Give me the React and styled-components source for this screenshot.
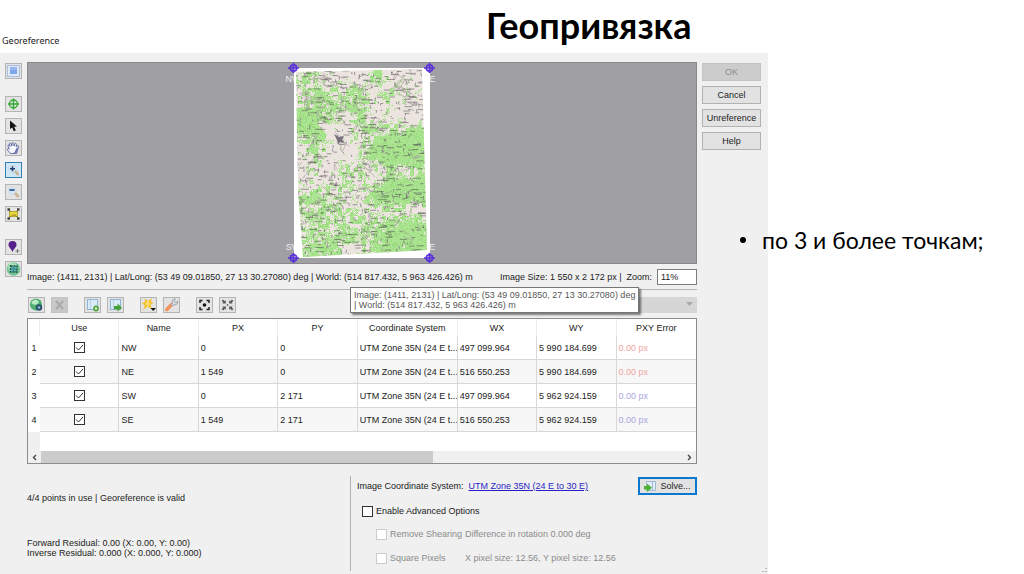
import React from 'react';
import styled, { createGlobalStyle, css } from 'styled-components';

const uiFont = '"Liberation Sans", Arial, sans-serif';
const slideFont = 'Lato, "Open Sans", sans-serif';

const GlobalStyle = createGlobalStyle`
  * {
    box-sizing: border-box;
  }

  body {
    margin: 0;
    background: #fff;
    color: #222;
    font-family: ${uiFont};
    font-size: 9px;
    line-height: 10px;
  }

  button, input, select {
    font: inherit;
    color: inherit;
  }
`;

const Slide = styled.main`
  display: flex;
  flex-direction: column;
  min-height: 100vh;
`;

const SlideHeader = styled.header`
  display: grid;
  grid-template-columns: 486fr 538fr;
  height: 53px;
`;

const SlideTitle = styled.h1`
  margin: 0;
  font-family: ${slideFont};
  font-size: 36px;
  font-weight: 700;
  line-height: 50px;
  color: #000;
`;

const Caption = styled.h2`
  align-self: end;
  margin: 0;
  padding: 0 2px 6px;
  font-family: "Noto Sans", sans-serif;
  font-size: 9px;
  font-weight: 400;
  line-height: 12px;
`;

const SlideBody = styled.div`
  flex: 1;
  display: grid;
  grid-template-columns: minmax(0, 740fr) 28px minmax(0, 256fr);
`;

const Bullets = styled.ul`
  grid-column: 2 / 4;
  grid-row: 1;
  z-index: 1;
  margin: 0;
  padding: 172px 0 0;
  list-style: none;
  font-family: ${slideFont};
  font-size: 23px;
  line-height: 30px;
  color: #000;

  li {
    display: grid;
    grid-template-columns: 22px 1fr;
  }

  li::before {
    align-self: center;
    justify-self: start;
    width: 6px;
    height: 6px;
    border-radius: 50%;
    background: #000;
    content: '';
  }
`;

const Dialog = styled.section`
  position: relative;
  grid-column: 1 / 3;
  grid-row: 1;
  display: flex;
  align-items: stretch;
  gap: 5px;
  padding: 9px 7px 0 5px;
  background: #f0f0f0;
`;

const ResizeGrip = styled.svg`
  position: absolute;
  right: 0;
  bottom: 0;
`;

const ToolColumn = styled.nav`
  display: flex;
  flex-direction: column;
  gap: 17px;
  padding-top: 1px;
`;

const ToolGroup = styled.div`
  display: flex;
  flex-direction: ${(props) => (props.$row ? 'row' : 'column')};
  gap: 6px;
`;

const IconButton = styled.button`
  width: 17px;
  height: 16px;
  padding: 0;
  border: 1px solid #b4b4b4;
  background: #e3e3e3;

  svg {
    display: block;
  }

  ${(props) => props.$active && css`
    border-color: #2f7fb5;
    background: #cfe6f7;
  `}

  &:disabled {
    border-color: #c4c4c4;
    background: #c8c8c8;
  }
`;

const Main = styled.div`
  flex: 1;
  min-width: 0;
`;

const Canvas = styled.div`
  display: flex;
  justify-content: center;
  border: 1px solid #88888c;
  background: #a09fa4;

  svg {
    display: block;
  }
`;

const StatusRow = styled.div`
  display: flex;
  align-items: center;
  height: 26px;
  border-bottom: 1px solid #b4b4b4;
  white-space: nowrap;
`;

const Position = styled.span`
  flex: 1;
`;

const ZoomInput = styled.input`
  width: 40px;
  height: 16px;
  margin-left: 5px;
  padding: 0 3px;
  border: 1px solid #7c7c7c;
  background: #fff;
`;

const Toolbar = styled.div`
  position: relative;
  display: flex;
  align-items: center;
  gap: 16px;
  height: 28px;
  padding: 1px 0 0 1px;
`;

const Method = styled.select`
  width: 170px;
  height: 16px;
  margin-left: auto;
  border: 0;
  border-radius: 0;
  appearance: none;
  background: #ccc url("data:image/svg+xml,%3Csvg xmlns='http://www.w3.org/2000/svg' width='7' height='5'%3E%3Cpath d='M0 0h7L3.5 4z' fill='%238c8c8c'/%3E%3C/svg%3E") no-repeat right 4px center;
`;

const Tooltip = styled.div`
  position: absolute;
  top: -3px;
  left: 323px;
  padding: 2px 3px;
  border: 1px solid #767676;
  background: #fff;
  box-shadow: 2px 2px 2px rgba(0, 0, 0, 0.5);
  color: #575757;
  white-space: nowrap;
`;

const TableFrame = styled.div`
  border: 1px solid #8c8c8c;
  background: linear-gradient(90deg, #f0f0f0 12px, #fff 12px);
`;

const PointTable = styled.table`
  width: 100%;
  margin-bottom: 19px;
  table-layout: fixed;
  border-collapse: separate;
  border-spacing: 0;
  background: #fff;

  col.row {
    width: 12px;
  }

  col.wide {
    width: 100px;
  }

  th {
    padding: 0;
    font-weight: 400;
    text-align: center;
  }

  thead th {
    height: 17px;
    border-right: 1px solid #ececec;
  }

  tbody th, td {
    height: 24px;
  }

  td {
    padding: 0 2px;
    border-right: 1px solid #d8d8d8;
    border-bottom: 1px solid #d8d8d8;
    white-space: nowrap;
    overflow: hidden;
  }

  tr > :last-child {
    border-right: 0;
  }

  tbody tr:nth-child(even) td {
    background: #f7f7f7;
  }
`;

const UseCell = styled.td`
  text-align: center;
`;

const ErrorCell = styled.td`
  color: ${(props) => (props.$world ? '#a9a6dc' : '#f3a3a3')};
`;

const CheckBox = styled.input.attrs({ type: 'checkbox' })`
  flex: none;
  width: 11px;
  height: 11px;
  margin: 0;
  appearance: none;
  border: 1px solid #333;
  background: #fff;
  vertical-align: middle;

  &:checked {
    background: #fff url("data:image/svg+xml,%3Csvg xmlns='http://www.w3.org/2000/svg' width='9' height='9'%3E%3Cpath d='M1 4.5L3.5 7L8 2' fill='none' stroke='%23333'/%3E%3C/svg%3E") no-repeat center;
  }

  &:disabled {
    border-color: #ccc;
  }
`;

const ScrollBar = styled.div`
  display: flex;
  align-items: center;
  height: 12px;
  background: #f0f0f0;

  svg {
    flex: none;
    margin: 0 4px;
  }
`;

const ScrollTrack = styled.div`
  flex: 1;
  height: 12px;
`;

const ScrollThumb = styled.div`
  width: 61%;
  height: 12px;
  background: #cbcbcb;
`;

const Footer = styled.div`
  display: grid;
  grid-template-columns: 323fr 347fr;
  padding-top: 12px;
`;

const Summary = styled.div`
  display: flex;
  flex-direction: column;
  gap: 35px;
  padding-top: 17px;

  p {
    margin: 0;
  }
`;

const Options = styled.div`
  display: flex;
  flex-direction: column;
  height: 95px;
  padding-left: 6px;
  border-left: 1px solid #b0b0b0;
`;

const SystemRow = styled.div`
  display: flex;
  align-items: center;
  gap: 5px;
  height: 20px;
  margin-bottom: 4px;

  a {
    flex: 1;
    color: #2a1fc4;
  }
`;

const OptionRow = styled.div`
  display: grid;
  grid-template-columns: ${(props) => (props.$nested ? '89px 1fr' : '1fr')};
  align-items: center;
  height: ${(props) => (props.$nested ? 24 : 22)}px;
  padding-left: ${(props) => (props.$nested ? 19 : 5)}px;
  color: ${(props) => (props.$nested ? '#8b8b8b' : '#222')};

  label {
    display: flex;
    align-items: center;
    gap: 3px;
  }
`;

const PushButton = styled.button`
  display: flex;
  align-items: center;
  justify-content: center;
  gap: 3px;
  width: 59px;
  height: 18px;
  padding: 0;
  border: 1px solid #b2b2b2;
  background: #e2e2e2;

  ${(props) => props.$primary && css`
    border: 2px solid #0a78d0;
  `}

  &:disabled {
    border-color: #c4c4c4;
    background: #ccc;
    color: #8c8c8c;
  }
`;

const Actions = styled.div`
  display: flex;
  flex-direction: column;
  gap: 5px;
  padding-top: 1px;
`;

const icons = {
  image: (
    <>
      <rect x="1.5" y="1.5" width="12" height="11" fill="#dfe9f8" stroke="#a9bfe0" />
      <rect x="4" y="3" width="7" height="7" fill="#7fa5ea" />
      <rect x="4" y="3" width="7" height="3" fill="#94b5f0" />
    </>
  ),
  target: (
    <g fill="none" stroke="#35a832" strokeWidth="1.4">
      <circle cx="7.5" cy="7" r="4" />
      <path d="M7.5 1.5v11M2 7h11" />
    </g>
  ),
  arrow: <path d="M4 1.500v8.500l2.200-1.600 1.600 3.800 2-.8L8.200 7.700l2.800-.2z" fill="#151515" />,
  hand: (
    <>
      <path
        d="M4.500 12.500L1.500 9C1 7.500 2.300 7 3.300 8.200L2 5c-.3-1.300 1-1.600 1.500-.5L4 5.500 3.600 3c0-1.300 1.400-1.300 1.700 0L5.800 5 6 2.500c.2-1.200 1.700-1.100 1.800.1L8 5l.8-2c.5-1 1.800-.6 1.600.6L10.200 6c1.300-2 3-1.500 2.300 0L10.500 12.500z"
        fill="#f6f7fd"
        stroke="#5a649c"
        strokeWidth=".9"
      />
      <path d="M10.500 12.500l2-6.500-2.300 1.500-1.700 4-4 1z" fill="#6d78b4" />
    </>
  ),
  zoomIn: (
    <>
      <circle cx="6.500" cy="6" r="3.800" fill="#dcebf8" stroke="#bfd3e6" strokeWidth=".8" />
      <path d="M9 8l3.500 4" stroke="#c9b18c" strokeWidth="2.600" />
      <path d="M4 5.800h5M6.500 3.300v5" stroke="#1f3d6d" strokeWidth="1.600" />
    </>
  ),
  zoomOut: (
    <>
      <circle cx="6.500" cy="6" r="3.800" fill="#d6e6f5" stroke="#cbd8e4" strokeWidth=".8" />
      <path d="M9 8l3.500 4" stroke="#c9b18c" strokeWidth="2.600" />
      <path d="M3.500 5h5" stroke="#2b588f" strokeWidth="1.800" />
    </>
  ),
  extent: (
    <>
      <rect x="3.500" y="4.500" width="8" height="5" fill="#e8d840" stroke="#b8a52e" />
      <path d="M5 9l2-2 1.500 1L10 6.500V9z" fill="#b89c28" />
      <path d="M1.500 1.200h2.500v2.500H1.500zM11 1.200h2.500v2.500H11zM1.500 10.300h2.500v2.500H1.500zM11 10.300h2.500v2.500H11z" fill="#454538" />
      <path d="M3.500 3.500l1 1M11.500 3.500l-1 1M3.500 10.500l1-1M11.500 10.500l-1-1" stroke="#454538" />
    </>
  ),
  pin: (
    <>
      <path d="M6.500 12.500C6 9 2.500 7.500 2.500 5a4 4 0 0 1 8 0c0 2.500-3.500 4-4 7.500z" fill="#56208c" />
      <path d="M9.500 11h4M11.500 9v4" stroke="#777" />
    </>
  ),
  globeSelect: (
    <>
      <circle cx="7.500" cy="7" r="6.800" fill="#74c493" />
      <circle cx="6.500" cy="5" r="4.500" fill="#a4dfb5" />
      <rect x="4.500" y="4" width="6.500" height="6" fill="#58b4ac" stroke="#1d4a4a" strokeWidth="1.300" strokeDasharray="2 1" />
      <path d="M5.500 7h4.500M7.700 5v4.500" stroke="#2d7d74" strokeWidth=".7" />
    </>
  ),
  globeCamera: (
    <>
      <circle cx="7" cy="6.500" r="6" fill="#4fae70" />
      <path d="M2.500 5c1-4 6-4 7-1.500S5 8 3.500 6z" fill="#bce9c6" />
      <circle cx="10" cy="9.500" r="3.200" fill="#26526b" />
      <circle cx="10" cy="9.500" r="1.300" fill="#8fb7c9" />
    </>
  ),
  remove: <path d="M4 3l7 8M11 3l-7 8" stroke="#acacac" strokeWidth="2.400" />,
  addPoint: (
    <>
      <rect x="2.500" y="1.500" width="10" height="10" fill="#dcebf8" stroke="#8fb4d6" />
      <path d="M5.500 2v9" stroke="#b7d2e8" />
      <circle cx="11" cy="10.500" r="2.900" fill="#50a63c" />
      <circle cx="11" cy="10.500" r="1.200" fill="#e4f6da" />
    </>
  ),
  exportPoint: (
    <>
      <rect x="2.500" y="1.500" width="10" height="10" fill="#dcebf8" stroke="#8fb4d6" />
      <path d="M5.500 2v9" stroke="#b7d2e8" />
      <path d="M6 8h3.500V5.500L14 9.800 9.500 13.500v-2.300H6z" fill="#45a038" />
    </>
  ),
  flash: (
    <>
      <path d="M3.500 1l3.500 1.500 4-2-1 3.500 2.500 1-3 2 1.500 4.500-4.500-3-4.500 3.500 1.800-4.500L.8 5l3.200-1z" fill="#f5c02e" />
      <path d="M6.500 3l-2 3.500h2.500l-1.500 3 4-4H7l1.500-2.500z" fill="#fde58a" />
      <path d="M9.500 10h5.500L12.200 13z" fill="#111" />
    </>
  ),
  wrench: (
    <>
      <path d="M2.800 11.500l5-5" stroke="#f3945f" strokeWidth="3.800" strokeLinecap="round" />
      <path d="M7 6.500L8.500 5c-1-2.500.7-4.500 3-4.200L10 3l1.700 1.600L14 3.300c0 2.600-2 4-4 3.300L8.500 8z" fill="#d3dbe0" stroke="#8d99a3" strokeWidth=".8" />
    </>
  ),
  center: (
    <>
      <path d="M3 5V2.500h2.500M9.500 2.500H12V5M3 9v2.500h2.500M9.500 11.500H12V9" fill="none" stroke="#222" strokeWidth="1.500" />
      <circle cx="7.500" cy="7" r="1.800" fill="#111" />
    </>
  ),
  collapse: (
    <>
      <path
        d="M5.800 5.500H2.300l1-1-1.600-1.600 1.300-1.300 1.600 1.600 1.200-1zM9.200 5.500h3.500l-1-1 1.600-1.600L12 1.600l-1.600 1.600-1.200-1zM5.800 8.500H2.300l1 1-1.600 1.600 1.300 1.300 1.600-1.600 1.200 1zM9.200 8.500h3.500l-1 1 1.600 1.600-1.300 1.300-1.600-1.600-1.200 1z"
        fill="#555"
      />
      <circle cx="7.500" cy="7" r=".8" fill="#333" />
    </>
  ),
};

const toolGroups = [
  [['image', 'Show image']],
  [
    ['target', 'Locate'],
    ['arrow', 'Select'],
    ['hand', 'Pan'],
    ['zoomIn', 'Zoom in', { $active: true }],
    ['zoomOut', 'Zoom out'],
    ['extent', 'Full extent'],
  ],
  [
    ['pin', 'Add point'],
    ['globeSelect', 'Map extent'],
  ],
];

const barGroups = [
  [
    ['globeCamera', 'Show on map'],
    ['remove', 'Remove', { disabled: true }],
  ],
  [
    ['addPoint', 'Import points'],
    ['exportPoint', 'Export points'],
  ],
  [
    ['flash', 'Quick actions'],
    ['wrench', 'Settings'],
  ],
  [
    ['center', 'Center point'],
    ['collapse', 'Fit points'],
  ],
];

const columns = ['Use', 'Name', 'PX', 'PY', 'Coordinate System', 'WX', 'WY', 'PXY Error'];

const points = [
  { name: 'NW', px: '0', py: '0', wx: '497 099.964', wy: '5 990 184.699' },
  { name: 'NE', px: '1 549', py: '0', wx: '516 550.253', wy: '5 990 184.699' },
  { name: 'SW', px: '0', py: '2 171', wx: '497 099.964', wy: '5 962 924.159', world: true },
  { name: 'SE', px: '1 549', py: '2 171', wx: '516 550.253', wy: '5 962 924.159', world: true },
];

// forest cover of the map sheet, 0 (open) to 9 (dense)
const forest = [
  '441006210',
  '364461421',
  '366663320',
  '875271110',
  '783145557',
  '263126889',
  '150036899',
  '121442434',
  '222423788',
  '565338898',
  '445432431',
  '363343685',
  '555666888',
  '566324667',
];

function createRandom(seed) {
  let s = seed;
  return () => {
    s = (s * 16807) % 2147483647;
    return s / 2147483647;
  };
}

function buildMap() {
  const random = createRandom(4217);
  const noise = Array.from({ length: 60 }, () => Array.from({ length: 45 }, random));
  const cover = (x, y) => {
    const u = Math.max(0, Math.min(7.99, ((x - 294) / 133) * 9 - 0.5));
    const v = Math.max(0, Math.min(12.99, ((y - 70) / 187) * 14 - 0.5));
    const c = Math.floor(u);
    const r = Math.floor(v);
    const a = forest[r][c] * (1 - u + c) + forest[r][c + 1] * (u - c);
    const b = forest[r + 1][c] * (1 - u + c) + forest[r + 1][c + 1] * (u - c);
    return (a * (1 - v + r) + b * (v - r)) / 9;
  };
  const light = [];
  const dark = [];
  for (let y = 68; y < 258; y += 1) {
    for (let x = 294; x < 430; x += 1) {
      const n = noise[Math.floor((y - 68) / 4)][Math.floor((x - 294) / 4)];
      if (cover(x, y) * 1.15 > n * 0.6 + random() * 0.4) {
        (random() < 0.25 ? dark : light).push(`M${x} ${y}h1v1h-1z`);
      }
    }
  }
  const labels = Array.from({ length: 480 }, () => {
    const x = 295 + random() * 128;
    const y = 70 + random() * 187;
    return `M${x.toFixed(1)} ${y.toFixed(1)}h${(1 + random() * 7).toFixed(1)}`;
  });
  const marks = Array.from({ length: 300 }, () => {
    const x = 295 + random() * 130;
    const y = 70 + random() * 185;
    return `M${x.toFixed(1)} ${y.toFixed(1)}l${(random() * 2 - 1).toFixed(1)} ${(1 + random() * 3).toFixed(1)}`;
  });
  const roads = Array.from({ length: 90 }, () => {
    const x = 295 + random() * 125;
    const y = 70 + random() * 180;
    const step = () => (random() * 14 - 7).toFixed(1);
    return `M${x.toFixed(1)} ${y.toFixed(1)}q${step()} ${step()} ${step()} ${step()}t${step()} ${step()}`;
  });
  return {
    light: light.join(''),
    dark: dark.join(''),
    labels: labels.join(''),
    marks: marks.join(''),
    roads: roads.join(''),
  };
}

const map = buildMap();

const corners = [
  { name: 'NW', x: 293, y: 68, labelY: 82 },
  { name: 'NE', x: 429, y: 68, labelY: 82 },
  { name: 'SW', x: 293, y: 258, labelY: 250 },
  { name: 'SE', x: 429, y: 258, labelY: 250 },
];

function MapSheet() {
  return (
    <svg width="160" height="200" viewBox="282 63 160 200">
      <defs>
        <clipPath id="sheet">
          <path d="M296 72L422 69L427 250L303 257L298 190z" />
        </clipPath>
      </defs>
      {corners.map((c) => (
        <text key={c.name} x={c.x} y={c.labelY} fontSize="9" fill="#ececf0" textAnchor="middle">{c.name}</text>
      ))}
      <path d="M294 68h136v190h-136z" fill="#fff" />
      <g clipPath="url(#sheet)">
        <path d="M290 66h142v194h-142z" fill="#ece4df" />
        <path d={map.light} fill="#ade593" />
        <path d={map.dark} fill="#98da7c" />
        <path d="M318 122c5-3 11 2 15 6s10 0 13-4 6-3 5 2-6 8-10 12-12 1-15-4-8-7-8-12z" fill="#ece4df" />
        <path d={map.roads} fill="none" stroke="#a99da3" strokeWidth=".6" />
        <path d={map.marks} stroke="#6b5f78" strokeWidth="1" opacity=".6" />
        <path d={map.labels} stroke="#4a4648" strokeWidth=".8" opacity=".65" />
        <path d="M334 134l5 3 5-1-2 4 3 3-5-1-2 3-1-5z" fill="#77717c" />
      </g>
      {corners.map((c) => (
        <g key={c.name} fill="none" stroke="#5a34d8" strokeWidth="1.700">
          <path d={`M${c.x - 5} ${c.y}h11M${c.x + 0.5} ${c.y - 5}v10`} />
          <circle cx={c.x + 0.5} cy={c.y} r="3.200" />
        </g>
      ))}
    </svg>
  );
}

function Tools({ items, row }) {
  return (
    <ToolGroup $row={row}>
      {items.map(([icon, label, state]) => (
        <IconButton key={icon} type="button" aria-label={label} {...state}>
          <svg width="15" height="14" viewBox="0 0 15 14">{icons[icon]}</svg>
        </IconButton>
      ))}
    </ToolGroup>
  );
}

function Points() {
  return (
    <TableFrame>
      <PointTable>
        <colgroup>
          <col className="row" />
          {columns.map((name) => (
            <col key={name} className={name === 'Coordinate System' ? 'wide' : undefined} />
          ))}
        </colgroup>
        <thead>
          <tr>
            <th aria-label="Row" />
            {columns.map((name) => <th key={name} scope="col">{name}</th>)}
          </tr>
        </thead>
        <tbody>
          {points.map((p, i) => (
            <tr key={p.name}>
              <th scope="row">{i + 1}</th>
              <UseCell><CheckBox defaultChecked aria-label={`Use ${p.name}`} /></UseCell>
              <td>{p.name}</td>
              <td>{p.px}</td>
              <td>{p.py}</td>
              <td>UTM Zone 35N (24 E t...</td>
              <td>{p.wx}</td>
              <td>{p.wy}</td>
              <ErrorCell $world={p.world}>0.00 px</ErrorCell>
            </tr>
          ))}
        </tbody>
      </PointTable>
      <ScrollBar>
        <svg width="5" height="7" viewBox="0 0 5 7"><path d="M4 1L1.500 3.500L4 6" fill="none" stroke="#444" strokeWidth="1.400" /></svg>
        <ScrollTrack><ScrollThumb /></ScrollTrack>
        <svg width="5" height="7" viewBox="0 0 5 7"><path d="M1 1l2.500 2.500L1 6" fill="none" stroke="#444" strokeWidth="1.400" /></svg>
      </ScrollBar>
    </TableFrame>
  );
}

function App() {
  return (
    <Slide>
      <GlobalStyle />
      <SlideHeader>
        <Caption>Georeference</Caption>
        <SlideTitle>Геопривязка</SlideTitle>
      </SlideHeader>
      <SlideBody>
        <Dialog>
          <ToolColumn>
            {toolGroups.map((items) => <Tools key={items[0][0]} items={items} />)}
          </ToolColumn>
          <Main>
            <Canvas><MapSheet /></Canvas>
            <StatusRow>
              <Position>Image: (1411, 2131) | Lat/Long: (53 49 09.01850, 27 13 30.27080) deg | World: (514 817.432, 5 963 426.426) m</Position>
              <label htmlFor="zoom">Image Size: 1 550 x 2 172 px |&nbsp; Zoom:</label>
              <ZoomInput id="zoom" defaultValue="11%" />
            </StatusRow>
            <Toolbar>
              {barGroups.map((items) => <Tools key={items[0][0]} items={items} row />)}
              <Method disabled aria-label="Method" />
              <Tooltip role="tooltip">
                Image: (1411, 2131) | Lat/Long: (53 49 09.01850, 27 13 30.27080) deg
                <br />
                | World: (514 817.432, 5 963 426.426) m
              </Tooltip>
            </Toolbar>
            <Points />
            <Footer>
              <Summary>
                <p>4/4 points in use | Georeference is valid</p>
                <p>
                  Forward Residual: 0.00 (X: 0.00, Y: 0.00)
                  <br />
                  Inverse Residual: 0.000 (X: 0.000, Y: 0.000)
                </p>
              </Summary>
              <Options>
                <SystemRow>
                  <span>Image Coordinate System:</span>
                  <a href="#system">UTM Zone 35N (24 E to 30 E)</a>
                  <PushButton type="button" $primary>
                    <svg width="13" height="12" viewBox="0 0 13 12">
                      <path d="M2.500 1.500h9v9h-9z" fill="#e3eef8" stroke="#9fb9d2" />
                      <path d="M8.500 2v8" stroke="#9fb9d2" />
                      <path d="M0 6h3V3.500l5 4.200L3 12V9.500H0z" fill="#4cb035" />
                    </svg>
                    Solve...
                  </PushButton>
                </SystemRow>
                <OptionRow>
                  <label><CheckBox />Enable Advanced Options</label>
                </OptionRow>
                <OptionRow $nested>
                  <label><CheckBox disabled />Remove Shearing</label>
                  <span>Difference in rotation 0.000 deg</span>
                </OptionRow>
                <OptionRow $nested>
                  <label><CheckBox disabled />Square Pixels</label>
                  <span>X pixel size: 12.56, Y pixel size: 12.56</span>
                </OptionRow>
              </Options>
            </Footer>
          </Main>
          <Actions>
            <PushButton type="button" disabled>OK</PushButton>
            <PushButton type="button">Cancel</PushButton>
            <PushButton type="button">Unreference</PushButton>
            <PushButton type="button">Help</PushButton>
          </Actions>
          <ResizeGrip width="8" height="6" viewBox="0 0 8 6" fill="#b8b8b8">
            <path d="M5 0h2v1h-2zM5 3h2v1h-2zM2 3h2v1h-2z" />
          </ResizeGrip>
        </Dialog>
        <Bullets>
          <li>по 3 и более точкам;</li>
        </Bullets>
      </SlideBody>
    </Slide>
  );
}

export default App;
